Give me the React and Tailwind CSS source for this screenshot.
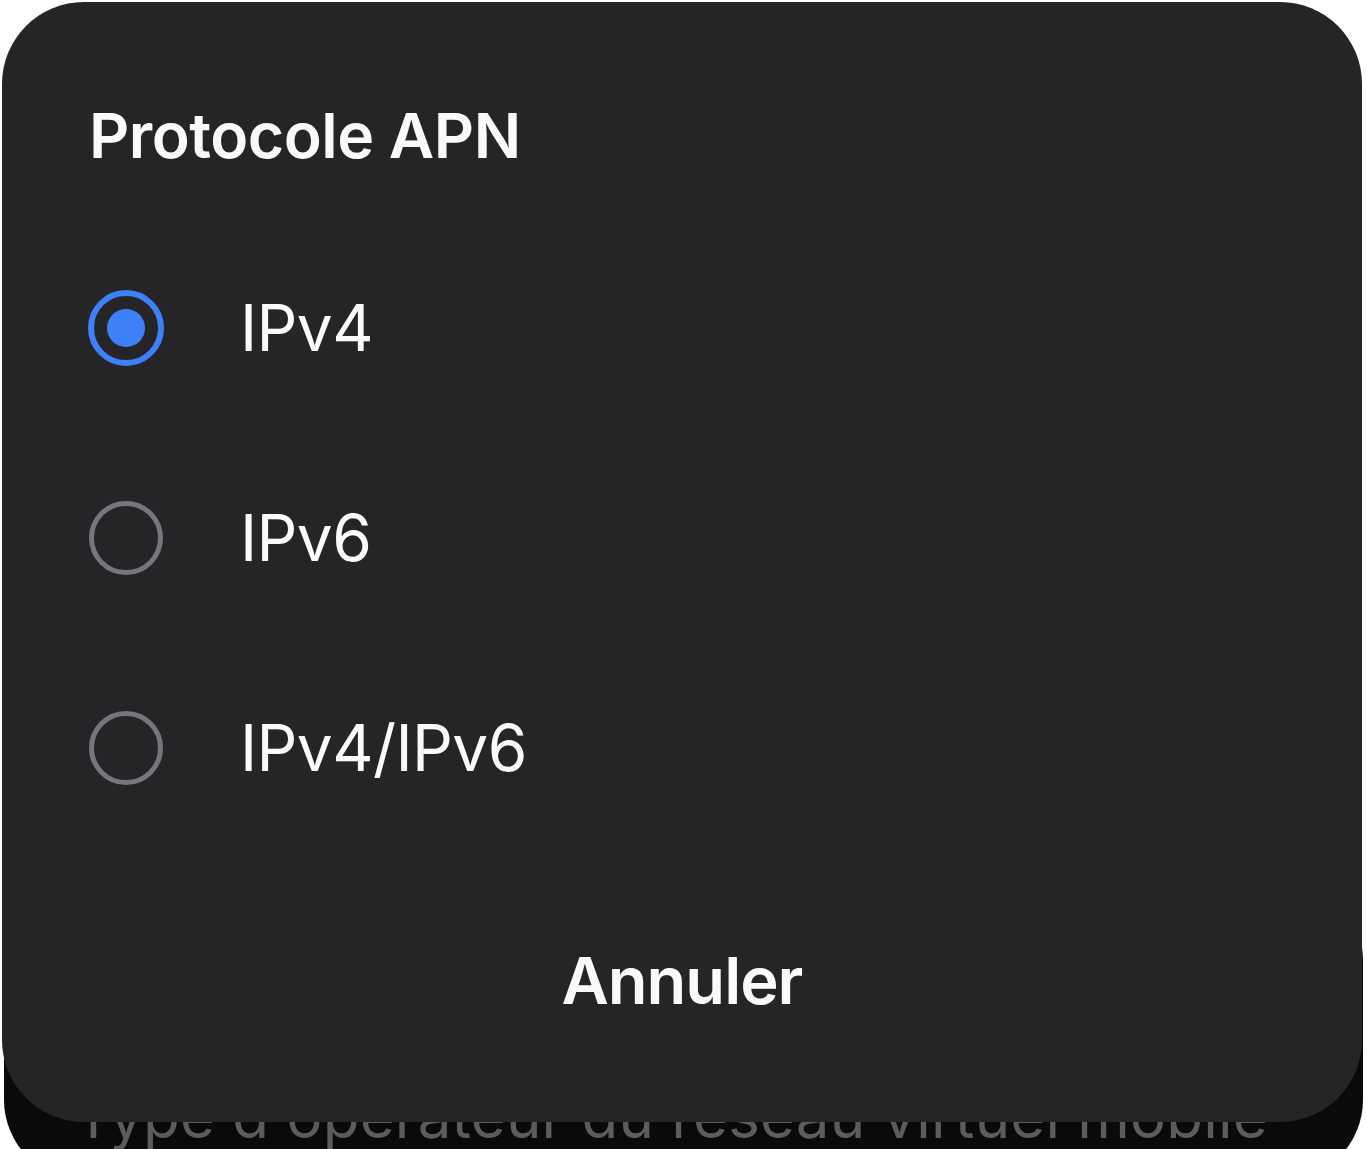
export default function App() {
  const font = { fontFamily: 'Inter, "Noto Sans", sans-serif' };
  const options = [
    { label: "IPv4", checked: true },
    { label: "IPv6", checked: false },
    { label: "IPv4/IPv6", checked: false },
  ];
  return (
    <div className="relative w-[1367px] h-[1149px] bg-white overflow-hidden" style={font}>
      {/* background screen behind the dialog */}
      <div className="absolute left-[4px] top-[880px] w-[1359px] h-[300px] rounded-[80px] bg-[#0a0a0a]">
        <div className="absolute left-[70px] top-[200px] text-[60px] leading-[72px] text-[#5c5c5e] whitespace-nowrap tracking-[0.2px]">
          Type d'opérateur du réseau virtuel mobile
        </div>
      </div>

      {/* dialog */}
      <div className="absolute left-[2px] top-[2px] w-[1360px] h-[1120px] rounded-[82px] bg-[#252527] flex flex-col">
        <div className="pt-[101px] pl-[87px] text-[62.5px] leading-[64px] font-semibold text-[#fafafc] tracking-[-0.5px]">
          Protocole APN
        </div>
        <div className="mt-[56px] flex flex-col">
          {options.map((o) => (
            <div key={o.label} className="h-[210px] flex items-center pl-[86px]">
              {o.checked ? (
                <div className="w-[76px] h-[76px] rounded-full border-[6px] border-[#3d80f7] flex items-center justify-center">
                  <div className="w-[38px] h-[38px] rounded-full bg-[#3d80f7]" />
                </div>
              ) : (
                <div className="w-[74px] h-[74px] ml-[1px] rounded-full border-[5px] border-[#77777b]" />
              )}
              <div className={`${o.checked ? "ml-[76px]" : "ml-[77px]"} text-[64px] leading-[66px] text-[#fafafc] tracking-[-0.6px]`}>
                {o.label}
              </div>
            </div>
          ))}
        </div>
        <div className="pt-[95px] flex justify-center">
          <div className="text-[65px] leading-[66px] font-semibold text-[#fafafc] tracking-[-1px]">Annuler</div>
        </div>
      </div>
    </div>
  );
}
